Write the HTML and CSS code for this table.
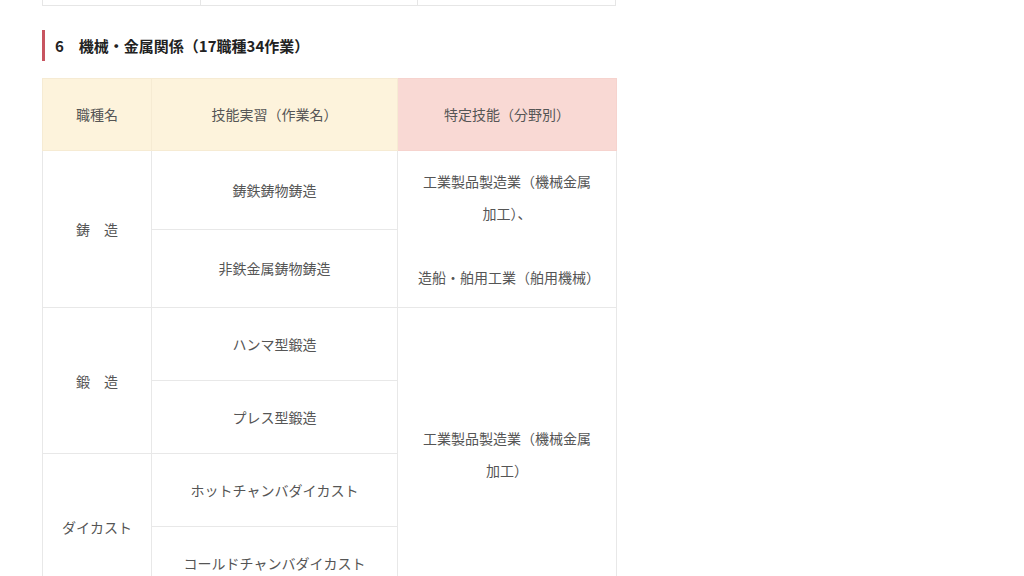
FILE: index.html
```html
<!DOCTYPE html>
<html lang="ja">
<head>
<meta charset="utf-8">
<link rel="stylesheet" href="styles.css">
</head>
<body>
<div class="page">
  <div class="prev-row">
    <div class="prev-cell c1"></div>
    <div class="prev-cell c2"></div>
    <div class="prev-cell c3"></div>
  </div>
  <h2 class="section-title">6　機械・金属関係（17職種34作業）</h2>
  <table class="jobs">
    <colgroup>
      <col class="col-a">
      <col class="col-b">
      <col class="col-c">
    </colgroup>
    <thead>
      <tr>
        <th class="head-cream">職種名</th>
        <th class="head-cream">技能実習（作業名）</th>
        <th class="head-pink">特定技能（分野別）</th>
      </tr>
    </thead>
    <tbody>
      <tr>
        <td rowspan="2">鋳　造</td>
        <td>鋳鉄鋳物鋳造</td>
        <td rowspan="2" class="wide"><p>工業製品製造業（機械金属加工）、</p><p class="gap">造船・舶用工業（舶用機械）</p></td>
      </tr>
      <tr>
        <td>非鉄金属鋳物鋳造</td>
      </tr>
      <tr>
        <td rowspan="2">鍛　造</td>
        <td>ハンマ型鍛造</td>
        <td rowspan="4" class="wide">工業製品製造業（機械金属加工）</td>
      </tr>
      <tr>
        <td>プレス型鍛造</td>
      </tr>
      <tr>
        <td rowspan="2">ダイカスト</td>
        <td>ホットチャンバダイカスト</td>
      </tr>
      <tr>
        <td>コールドチャンバダイカスト</td>
      </tr>
    </tbody>
  </table>
</div>
</body>
</html>
```

FILE: styles.css
```css
html, body {
  margin: 0;
  padding: 0;
  background: #ffffff;
}
body {
  font-family: "Noto Sans CJK JP", "Noto Sans", sans-serif;
  color: #555555;
}
.page {
  padding-left: 42px;
  width: 574px;
}
.prev-row {
  display: flex;
  height: 5px;
  border-bottom: 1px solid #e6e6e6;
}
.prev-cell {
  border-left: 1px solid #e6e6e6;
}
.prev-cell.c1 { width: 157px; }
.prev-cell.c2 { width: 216px; }
.prev-cell.c3 { flex: 1; border-right: 1px solid #e6e6e6; }

.section-title {
  margin: 24px 0 17px 0;
  border-left: 3px solid #c85560;
  padding-left: 10px;
  font-size: 15px;
  line-height: 31px;
  font-weight: bold;
  color: #222222;
}
.jobs {
  width: 574px;
  border-collapse: collapse;
  table-layout: fixed;
  font-size: 14px;
}
.col-a { width: 109px; }
.col-b { width: 246px; }
.col-c { width: 219px; }
.jobs th,
.jobs td {
  border: 1px solid #e8e8e8;
  padding: 20px 8px;
  line-height: 32px;
  text-align: center;
  vertical-align: middle;
  font-weight: normal;
  color: #555555;
}
.jobs th {
  padding: 19px 8px 20px;
}
.jobs th.head-cream {
  background: #fdf3dc;
  border-color: #f6ebd3;
}
.jobs th.head-pink {
  background: #f9d9d4;
  border-color: #f6d3ce;
}
.jobs td.wide {
  padding: 14px 20px;
}
.jobs td.wide p {
  margin: 0;
}
.jobs td.wide p.gap {
  margin-top: 32px;
}
```
